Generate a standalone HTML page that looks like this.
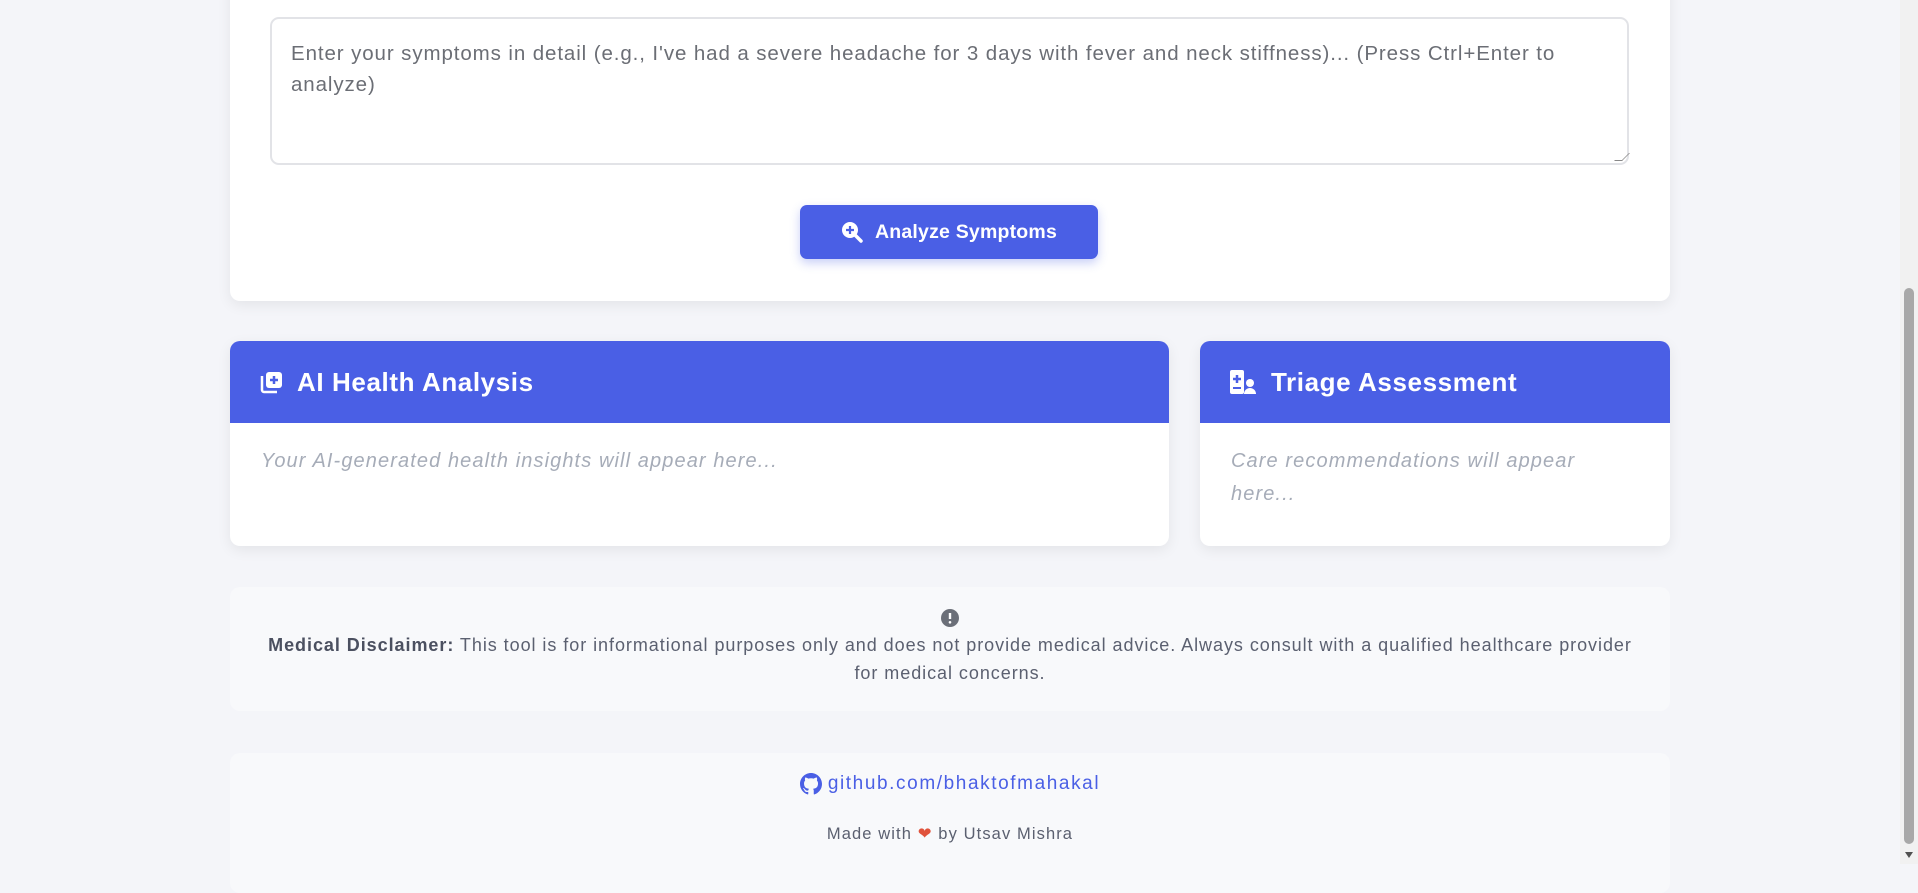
<!DOCTYPE html>
<html><head><meta charset="utf-8"><style>
*{box-sizing:border-box;margin:0;padding:0}
html,body{width:1918px;height:864px;overflow:hidden;background:#f4f5f9;font-family:"Liberation Sans",sans-serif}
.abs{position:absolute}
.card{background:#fff;border-radius:10px;box-shadow:0 4px 14px rgba(0,0,0,.07)}
</style></head><body>
<div class="abs card" style="left:230px;top:-20px;width:1440px;height:321px"></div>
<div class="abs" style="left:270px;top:17px;width:1359px;height:148px;border:2px solid #e2e3e7;border-radius:9px;background:#fff"></div>
<div class="abs" style="left:291px;top:38px;width:1320px;font-size:20.5px;letter-spacing:0.9px;line-height:31px;color:#6b6e75">Enter your symptoms in detail (e.g., I've had a severe headache for 3 days with fever and neck stiffness)... (Press Ctrl+Enter to analyze)</div>
<div class="abs" style="left:1618px;top:153px;width:8px;height:8px;border-right:1px solid #888;border-bottom:1px solid #888;transform:skewX(-45deg)"></div>
<div class="abs" style="left:800px;top:205px;width:298px;height:54px;background:#4a5fe5;border-radius:7px;box-shadow:0 4px 10px rgba(74,95,229,.3);color:#fff;font-weight:bold;font-size:19.5px;letter-spacing:0.2px;display:flex;align-items:center;justify-content:center;gap:12px">
<svg width="22" height="22" viewBox="0 0 22 22"><circle cx="9" cy="9" r="8" fill="#fff"/><path d="M14.5 14.5L20 20" stroke="#fff" stroke-width="3.5" stroke-linecap="round"/><path d="M9 5v8M5 9h8" stroke="#4a5fe5" stroke-width="2.2"/></svg>Analyze Symptoms</div>

<div class="abs card" style="left:230px;top:341px;width:939px;height:205px;overflow:hidden">
<div style="height:82px;background:#4a5fe5;color:#fff;font-weight:bold;font-size:26px;letter-spacing:0.6px;display:flex;align-items:center;padding-left:29px;gap:14px">
<svg width="24" height="24" viewBox="0 0 24 24"><path d="M3 6v14a2 2 0 0 0 2 2h13" stroke="#fff" stroke-width="2.5" fill="none"/><rect x="7" y="2" width="16" height="16" rx="3" fill="#fff"/><path d="M15 6v8M11 10h8" stroke="#4a5fe5" stroke-width="2.5"/></svg>AI Health Analysis</div>
<div style="padding:27px 31px;font-style:italic;font-size:20px;letter-spacing:1.1px;color:#a6acb8">Your AI-generated health insights will appear here...</div>
</div>
<div class="abs card" style="left:1200px;top:341px;width:470px;height:205px;overflow:hidden">
<div style="height:82px;background:#4a5fe5;color:#fff;font-weight:bold;font-size:26px;letter-spacing:0.6px;display:flex;align-items:center;padding-left:29px;gap:14px">
<svg width="28" height="26" viewBox="0 0 28 26"><rect x="1" y="1" width="14" height="24" rx="2" fill="#fff"/><path d="M8 6v8M4 10h8" stroke="#4a5fe5" stroke-width="2.5"/><path d="M4 19h8" stroke="#4a5fe5" stroke-width="2"/><circle cx="21" cy="14" r="4" fill="#fff"/><path d="M15 25a6 6 0 0 1 12 0z" fill="#fff"/></svg>Triage Assessment</div>
<div style="padding:22px 60px 0 31px;font-style:italic;font-size:20px;letter-spacing:1.1px;line-height:33px;color:#a6acb8">Care recommendations will appear here...</div>
</div>

<div class="abs" style="left:230px;top:587px;width:1440px;height:124px;background:#f8f9fb;border-radius:10px;text-align:center;color:#5b6070;font-size:18px;letter-spacing:0.95px;line-height:28px;padding:22px 28px 0">
<div style="height:22px;display:flex;justify-content:center"><svg width="18" height="18" viewBox="0 0 18 18"><circle cx="9" cy="9" r="9" fill="#6b6f78"/><path d="M9 4v6" stroke="#fff" stroke-width="2.4"/><circle cx="9" cy="13.3" r="1.3" fill="#fff"/></svg></div>
<b style="color:#4b5060">Medical Disclaimer:</b> This tool is for informational purposes only and does not provide medical advice. Always consult with a qualified healthcare provider for medical concerns.</div>

<div class="abs" style="left:230px;top:753px;width:1440px;height:140px;background:#f8f9fb;border-radius:10px;text-align:center">
<div style="position:absolute;top:20px;left:0;right:0;font-size:19px;letter-spacing:1.6px;color:#4a5fe5;display:flex;justify-content:center;align-items:center;gap:6px">
<svg width="22" height="22" viewBox="0 0 16 16"><path fill="#4a5fe5" d="M8 0C3.58 0 0 3.58 0 8c0 3.54 2.29 6.53 5.47 7.59.4.07.55-.17.55-.38 0-.19-.01-.82-.01-1.49-2.01.37-2.53-.49-2.69-.94-.09-.23-.48-.94-.82-1.13-.28-.15-.68-.52-.01-.53.63-.01 1.08.58 1.23.82.72 1.21 1.87.87 2.33.66.07-.52.28-.87.51-1.07-1.78-.2-3.64-.89-3.64-3.95 0-.87.31-1.59.82-2.15-.08-.2-.36-1.02.08-2.12 0 0 .67-.21 2.2.82.64-.18 1.32-.27 2-.27.68 0 1.36.09 2 .27 1.53-1.04 2.2-.82 2.2-.82.44 1.1.16 1.92.08 2.12.51.56.82 1.27.82 2.15 0 3.07-1.87 3.75-3.65 3.95.29.25.54.73.54 1.48 0 1.07-.01 1.93-.01 2.2 0 .21.15.46.55.38A8.013 8.013 0 0016 8c0-4.42-3.58-8-8-8z"/></svg>github.com/bhaktofmahakal</div>
<div style="position:absolute;top:71px;left:0;right:0;font-size:16.5px;letter-spacing:1.1px;color:#5b6070">Made with <span style="color:#e0523b">&#10084;</span> by Utsav Mishra</div>
</div>

<div class="abs" style="left:1900px;top:0;width:18px;height:864px;background:#f1f1f1"></div>
<div class="abs" style="left:1904px;top:288px;width:10px;height:556px;background:#a8a8a8;border-radius:5px"></div>
<div class="abs" style="left:1905px;top:852px;width:0;height:0;border-left:4px solid transparent;border-right:4px solid transparent;border-top:6px solid #505050"></div>
</body></html>
